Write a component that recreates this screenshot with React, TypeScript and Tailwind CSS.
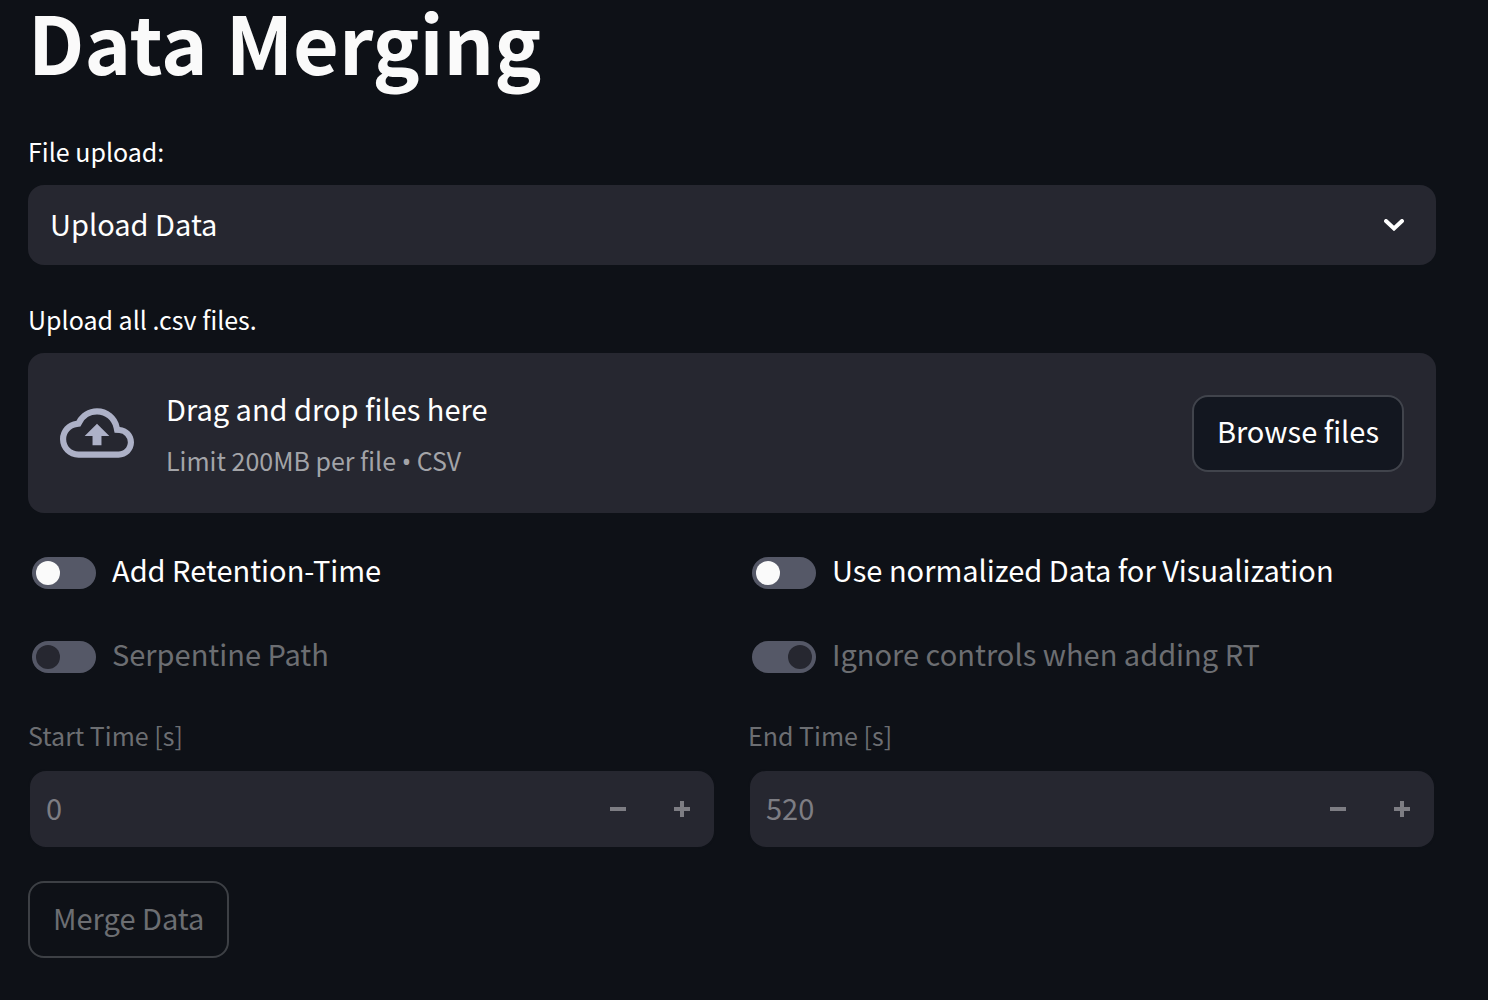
import { useState } from "react";

const labelClass = "mb-3.5 block text-[25px] leading-10";

function Toggle({ id, label, disabled = false, initial = false }: { id: string; label: string; disabled?: boolean; initial?: boolean }) {
  const [on, setOn] = useState(initial);
  return (
    <div className="ml-1 flex items-start gap-4">
      <input
        id={id}
        type="checkbox"
        role="switch"
        checked={on}
        disabled={disabled}
        onChange={(e) => setOn(e.target.checked)}
        className="h-8 w-16 shrink-0 appearance-none rounded-full bg-[#555867] p-1 before:block before:size-6 before:rounded-full before:bg-[#fafafa] checked:before:ml-8 disabled:before:bg-[#262730]"
      />
      <label htmlFor={id} className={disabled ? "text-[29px] leading-6 text-[#6c6e72]" : "text-[29px] leading-6"}>
        {label}
      </label>
    </div>
  );
}

function NumberField({ id, label, value }: { id: string; label: string; value: number }) {
  return (
    <div>
      <label htmlFor={id} className={`${labelClass} text-[#6c6e72]`}>
        {label}
      </label>
      <div className="flex h-20 overflow-hidden rounded-[18px] border-2 border-[#0e1117] bg-[#262730] text-[#7d7d83]">
        <input
          id={id}
          type="number"
          defaultValue={value}
          disabled
          className="min-w-0 flex-1 appearance-none bg-transparent px-4 pb-0.5 text-[29px] [-moz-appearance:textfield] [&::-webkit-inner-spin-button]:appearance-none"
        />
        <button type="button" disabled aria-label={`Decrease ${label}`} className="flex w-16 items-center justify-center">
          <svg width="16" height="16" viewBox="0 0 16 16" fill="currentColor">
            <path d="M0 6h16v4H0z" />
          </svg>
        </button>
        <button type="button" disabled aria-label={`Increase ${label}`} className="flex w-16 items-center justify-center">
          <svg width="16" height="16" viewBox="0 0 16 16" fill="currentColor">
            <path d="M6 0h4v6h6v4h-6v6H6v-6H0V6h6z" />
          </svg>
        </button>
      </div>
    </div>
  );
}

export default function App() {
  return (
    <main className="min-h-screen bg-[#0e1117] pr-[52px] pb-10 pl-7 font-['Noto_Sans_CJK_SC',sans-serif] text-white">
      <h1 className="mb-[49px] text-[79px] leading-[82px] font-bold text-[#fafafa]">Data Merging</h1>

      <label htmlFor="source" className={labelClass}>
        File upload:
      </label>
      <div className="relative mb-[34px]">
        <select id="source" className="h-20 w-full appearance-none rounded-2xl bg-[#262730] px-[22px] pb-0.5 text-[29px]">
          <option>Upload Data</option>
        </select>
        <svg className="pointer-events-none absolute top-[34px] right-8" width="20" height="12" viewBox="0 0 20 12" fill="none" stroke="#fff" strokeWidth="4" strokeLinecap="round">
          <path d="M2 2l8 7.5L18 2" />
        </svg>
      </div>

      <p id="drop-label" className={labelClass}>
        Upload all .csv files.
      </p>
      <section aria-labelledby="drop-label" className="mb-11 flex h-40 items-center rounded-2xl bg-[#262730] px-8">
        <svg className="mr-8 shrink-0 text-[#adb1c7]" width="74" height="74" viewBox="0 0 24 24" fill="currentColor">
          <path d="M19.35 10.04A7.49 7.49 0 0012 4C9.11 4 6.6 5.64 5.35 8.04A5.994 5.994 0 000 14c0 3.31 2.69 6 6 6h13c2.76 0 5-2.24 5-5 0-2.64-2.05-4.78-4.65-4.96zM19 18H6c-2.21 0-4-1.79-4-4 0-2.05 1.53-3.76 3.56-3.97l1.07-.11.5-.95A5.469 5.469 0 0112 6c2.62 0 4.88 1.86 5.39 4.43l.3 1.5 1.53.11A2.98 2.98 0 0122 15c0 1.65-1.35 3-3 3zM8 13h2.55v3h2.9v-3H16l-4-4z" />
        </svg>
        <div className="flex-1 pt-0.5">
          <p className="text-[29px] leading-[52px]">Drag and drop files here</p>
          <p className="text-[25px] leading-[52px] text-[#a3a4a8]">
            Limit 200MB per file <span className="font-['Noto_Sans',sans-serif]">•</span> CSV
          </p>
        </div>
        <button type="button" className="h-[77px] rounded-2xl border-2 border-[#41444c] bg-[#131720] px-[23px] pb-1 text-[29px]">
          Browse files
        </button>
      </section>

      <div className="mb-[42px] grid grid-cols-2 gap-x-8 gap-y-[52px]">
        <Toggle id="retention" label="Add Retention-Time" />
        <Toggle id="normalized" label="Use normalized Data for Visualization" />
        <Toggle id="serpentine" label="Serpentine Path" disabled />
        <Toggle id="controls" label="Ignore controls when adding RT" disabled initial />
      </div>

      <div className="mb-8 grid grid-cols-2 gap-x-8">
        <NumberField id="start" label="Start Time [s]" value={0} />
        <NumberField id="end" label="End Time [s]" value={520} />
      </div>

      <button type="button" disabled className="h-[77px] rounded-2xl border-2 border-[#3d4045] px-[23px] pb-1 text-[29px] text-[#6c6e72]">
        Merge Data
      </button>
    </main>
  );
}
